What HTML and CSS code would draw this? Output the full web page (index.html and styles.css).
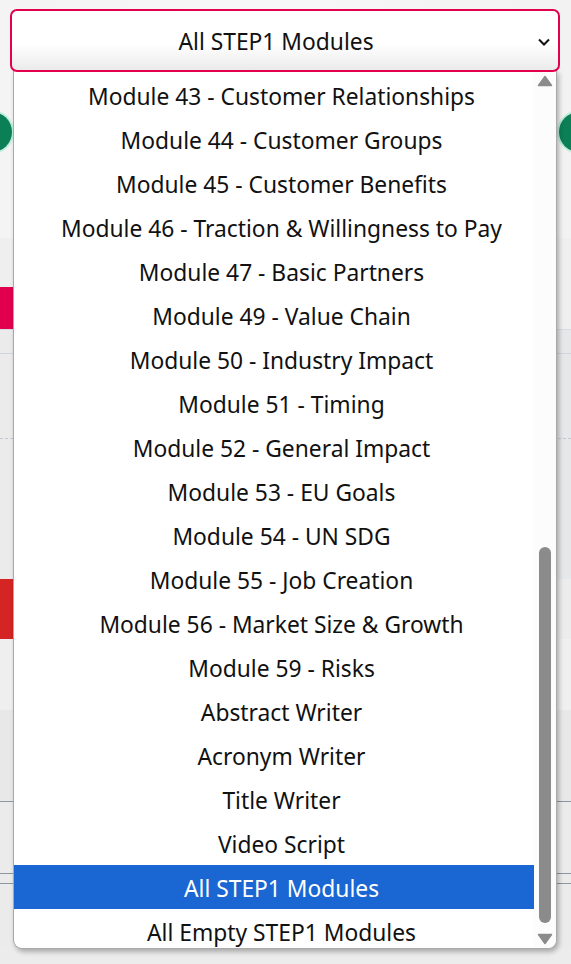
FILE: index.html
```html
<!DOCTYPE html>
<html>
<head>
<meta charset="utf-8">
<link rel="stylesheet" href="styles.css">
</head>
<body>
<div class="page">
  <div class="bg-head">
    <div class="circles"><span class="dot"></span><span class="dot"></span></div>
  </div>
  <div class="bg-band"></div>
  <div class="bg-badge-row"><span class="badge"></span></div>
  <div class="bg-card bg-card1"></div>
  <div class="bg-card bg-card2"></div>
  <div class="bg-card bg-card3"></div>
  <div class="bg-red-row"><span class="red"></span></div>
  <div class="bg-card bg-card4"></div>
  <div class="bg-rule bg-r1"></div>
  <div class="bg-rule bg-r2"></div>
  <div class="bg-rule bg-r3"></div>
  <div class="bg-rule bg-r4"></div>
</div>

<div class="overlay">
  <div class="select">
    <span class="select-label">All STEP1 Modules</span>
    <svg class="chevron" width="14" height="10" viewBox="0 0 14 10"><path d="M2 2.5 L7 7.5 L12 2.5" fill="none" stroke="#111" stroke-width="2"/></svg>
  </div>
  <div class="dropdown">
    <ul class="options">
      <li>Module 43 - Customer Relationships</li>
      <li>Module 44 - Customer Groups</li>
      <li>Module 45 - Customer Benefits</li>
      <li>Module 46 - Traction &amp; Willingness to Pay</li>
      <li>Module 47 - Basic Partners</li>
      <li>Module 49 - Value Chain</li>
      <li>Module 50 - Industry Impact</li>
      <li>Module 51 - Timing</li>
      <li>Module 52 - General Impact</li>
      <li>Module 53 - EU Goals</li>
      <li>Module 54 - UN SDG</li>
      <li>Module 55 - Job Creation</li>
      <li>Module 56 - Market Size &amp; Growth</li>
      <li>Module 59 - Risks</li>
      <li>Abstract Writer</li>
      <li>Acronym Writer</li>
      <li>Title Writer</li>
      <li>Video Script</li>
      <li class="selected">All STEP1 Modules</li>
      <li>All Empty STEP1 Modules</li>
    </ul>
    <div class="scrollbar">
      <svg class="arrow" width="16" height="12" viewBox="0 0 16 12"><path d="M8 1.5 L14.5 10.5 L1.5 10.5 Z" fill="#8b8b8b" stroke="#8b8b8b" stroke-linejoin="round" stroke-width="1.5"/></svg>
      <div class="track"><div class="thumb"></div></div>
      <svg class="arrow" width="16" height="12" viewBox="0 0 16 12"><path d="M1.5 1.5 L14.5 1.5 L8 10.5 Z" fill="#8b8b8b" stroke="#8b8b8b" stroke-linejoin="round" stroke-width="1.5"/></svg>
    </div>
  </div>
</div>
</body>
</html>
```

FILE: styles.css
```css
* { box-sizing: border-box; }
html, body { margin: 0; padding: 0; }
body {
  width: 571px;
  height: 964px;
  overflow: hidden;
  background: #ececec;
  font-family: "Noto Sans", "Open Sans", sans-serif;
  position: relative;
}

.page { display: flex; flex-direction: column; }
.bg-head {
  height: 238px;
  background: linear-gradient(90deg, #f4f4f4, #f7f7f7 50%, #f2f2f2);
  padding-top: 112px;
}
.circles { display: flex; justify-content: space-between; margin: 0 -28px; }
.dot {
  width: 40px; height: 40px; border-radius: 50%;
  background: #0b7f55;
  box-shadow: 0 0 0 2px #bfeede;
}
.bg-band { height: 49px; background: #efefef; }
.bg-badge-row { height: 42px; background: #efefef; }
.badge { display: block; width: 120px; height: 42px; background: #e0004d; }
.bg-card { border-top: 1px solid #d8dce2; background: linear-gradient(90deg, #ebebeb, #e6e7e9); }
.bg-card1 { height: 24px; }
.bg-card2 { height: 85px; border-top-color: #d0d5dd; }
.bg-card3 { height: 141px; border-top: 1px dashed #c4c8cf; }
.bg-red-row { height: 60px; background: #ececec; }
.red { display: block; width: 120px; height: 60px; background: #d42424; }
.bg-card4 { height: 71px; border-top: none; background: #efefef; }
.bg-rule { border-top: 1px solid #8e96a4; background: #ebebeb; }
.bg-r1 { height: 91px; background: #e8e8e8; border-top: none; }
.bg-r2 { height: 72px; }
.bg-r3 { height: 10px; }
.bg-r4 { height: 64px; }

.overlay {
  position: absolute;
  top: 9px;
  left: 10px;
  width: 550px;
  display: flex;
  flex-direction: column;
}
.select {
  height: 63px;
  border: 2px solid #e2004f;
  border-radius: 7px;
  background: linear-gradient(#ffffff 0%, #ffffff 55%, #ebebeb 100%);
  display: flex;
  align-items: center;
  justify-content: center;
  position: relative;
  font-size: 22.8px;
  color: #111;
  padding: 2px 18px 0 0;
}
.chevron { position: absolute; right: 7px; top: 26px; }

.dropdown {
  margin-left: 3px;
  margin-top: -2px;
  width: 544px;
  height: 879px;
  background: #fff;
  border: 1px solid #a9a9a9;
  border-top: none;
  border-radius: 0 0 9px 9px;
  box-shadow: 2px 3px 5px rgba(0,0,0,0.28);
  display: flex;
  overflow: hidden;
}
.options {
  list-style: none;
  margin: 0;
  padding: 3px 0 0;
  width: 520px;
  font-size: 22.8px;
  color: #111;
}
.options li {
  height: 44px;
  display: flex;
  align-items: center;
  justify-content: center;
  white-space: nowrap;
  padding: 3px 0 0 15px;
}
.options li.selected { background: #1a66d2; color: #fff; }

.scrollbar {
  width: 22px;
  background: #fcfcfc;
  display: flex;
  flex-direction: column;
  align-items: center;
  padding: 5px 0 3px;
}
.arrow { flex: none; }
.track {
  flex: 1;
  width: 12px;
  display: flex;
  flex-direction: column;
  justify-content: flex-end;
  padding-bottom: 10px;
}
.thumb { height: 376px; background: #8b8b8b; border-radius: 6px; }
```
